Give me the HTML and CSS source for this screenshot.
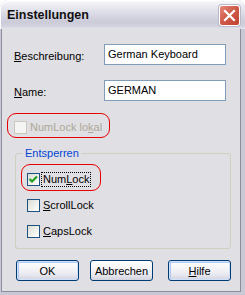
FILE: index.html
```html
<!DOCTYPE html>
<html lang="de">
<head>
  <meta charset="UTF-8" />
  <title>Einstellungen</title>
  <link rel="stylesheet" href="styles.css">
</head>
<body>
  <div class="window">
    <div class="titlebar">
      <span class="title">Einstellungen</span>
      <span class="close">
        <svg width="13" height="13" viewBox="0 0 13 13">
          <path d="M2 2 L11 11 M11 2 L2 11" stroke="#fff" stroke-width="2.2" stroke-linecap="square" fill="none"/>
        </svg>
      </span>
    </div>

    <div class="client">
      <div class="field">
        <label class="field-label"><u>B</u>eschreibung:</label>
        <div class="input">German Keyboard</div>
      </div>
      <div class="field">
        <label class="field-label"><u>N</u>ame:</label>
        <div class="input">GERMAN</div>
      </div>

      <div class="mark mark-local">
        <div class="check-row disabled">
          <span class="box"></span>
          <span class="check-text">NumLock lo<u>k</u>al</span>
        </div>
      </div>

      <div class="group">
        <span class="legend">Entsperren</span>
        <div class="mark mark-num">
          <div class="check-row">
            <span class="box">
              <svg width="11" height="11" viewBox="0 0 11 11">
                <path d="M1.5 5 L4 7.5 L9 2.5" stroke="#21a121" stroke-width="2.2" fill="none"/>
              </svg>
            </span>
            <span class="check-text focus">Num<u>L</u>ock</span>
          </div>
        </div>
        <div class="check-row row-scroll">
          <span class="box"></span>
          <span class="check-text"><u>S</u>crollLock</span>
        </div>
        <div class="check-row row-caps">
          <span class="box"></span>
          <span class="check-text"><u>C</u>apsLock</span>
        </div>
      </div>

      <div class="buttons">
        <button class="btn btn-default">OK</button>
        <button class="btn btn-cancel">Abbrechen</button>
        <button class="btn btn-help"><u>H</u>ilfe</button>
      </div>
    </div>
  </div>
</body>
</html>
```

FILE: styles.css
```css
* { box-sizing: border-box; }

body {
  margin: 0;
  background: #ffffff;
  font-family: "Liberation Sans", Arial, sans-serif;
  font-size: 11px;
  color: #000;
}

.window {
  width: 245px;
  height: 295px;
  background: #c9c9d6;
  border-radius: 8px 8px 0 0;
  overflow: hidden;
}

.titlebar {
  height: 29px;
  display: flex;
  justify-content: space-between;
  align-items: flex-start;
  padding: 5px 5px 0 7px;
  background: linear-gradient(#fdfdfe 0%, #eeeef4 15%, #dcdce7 45%, #cbcbd9 75%, #d2d2de 90%, #e4e4ec 100%);
  border-radius: 8px 8px 0 0;
  box-shadow: inset 1px 1px 0 #ffffff;
}

.title {
  margin-top: 3px;
  font-size: 12.5px;
  line-height: 15px;
  font-weight: bold;
  color: #111;
}

.close {
  width: 21px;
  height: 21px;
  display: flex;
  align-items: center;
  justify-content: center;
  border: 1px solid #ffffff;
  border-radius: 3px;
  background: linear-gradient(135deg, #e58a7c 0%, #d05c4c 45%, #c0402f 100%);
  box-shadow: 0 0 0 1px #b9b9c8;
}

.client {
  margin-left: 1px;
  width: 240px;
  height: 263px;
  border: 1px solid #8c8c9c;
  border-top: 0;
  background: #e0dfe3;
  padding-left: 12px;
  overflow: hidden;
}

.field {
  display: flex;
  align-items: center;
  height: 21px;
  margin-top: 15px;
}

.field-label {
  width: 90px;
  padding-top: 4px;
  line-height: 13px;
}

.input {
  width: 122px;
  height: 21px;
  display: flex;
  align-items: center;
  padding-left: 3px;
  background: #ffffff;
  border: 1px solid #7f9db9;
  line-height: 13px;
}

.mark {
  border: 1px solid #e60000;
  border-radius: 9px;
}

.mark-local {
  width: 103px;
  height: 25px;
  margin-top: 12px;
  margin-left: -7px;
  padding: 7px 0 0 6px;
}

.check-row {
  display: flex;
  align-items: center;
  height: 13px;
}

.box {
  width: 13px;
  height: 13px;
  flex: none;
  display: flex;
  align-items: center;
  justify-content: center;
  border: 1px solid #1c5180;
  background: linear-gradient(135deg, #dcdcd7 0%, #f2f2ee 60%, #ffffff 100%);
}

.check-text {
  margin-left: 1px;
  padding: 0 1px;
  border: 1px dotted transparent;
  line-height: 13px;
  white-space: nowrap;
}

.check-text.focus {
  border-color: #000;
}

.disabled .box {
  border-color: #cac8bb;
  background: #f5f5f3;
}

.disabled .check-text {
  color: #aca899;
}

.group {
  position: relative;
  width: 216px;
  height: 96px;
  margin-top: 15px;
  margin-left: 1px;
  padding: 10px 0 0 5px;
  border: 1px solid #d0d0bf;
  border-radius: 3px;
}

.legend {
  position: absolute;
  top: -7px;
  left: 7px;
  padding: 0 2px;
  line-height: 13px;
  background: #e0dfe3;
  color: #0046d5;
}

.mark-num {
  width: 80px;
  height: 27px;
  padding: 8px 0 0 5px;
}

.row-scroll {
  margin-top: 8px;
  margin-left: 6px;
}

.row-caps {
  margin-top: 13px;
  margin-left: 6px;
}

.buttons {
  display: flex;
  margin-top: 11px;
  margin-left: 2px;
}

.btn {
  width: 63px;
  height: 21px;
  padding: 0;
  font-family: "Liberation Sans", Arial, sans-serif;
  font-size: 11px;
  color: #000;
  border: 1px solid #003c74;
  border-radius: 3px;
  background: linear-gradient(#ffffff 0%, #f7f7fa 35%, #e6e6ee 75%, #d2d2de 100%);
}

.btn-default,
.btn-help {
  box-shadow: inset 0 0 0 1px #cee0fb, inset 1px 1px 0 1px #b2cbf5;
}

.btn-cancel {
  margin-left: 11px;
}

.btn-help {
  margin-left: 15px;
}
```
